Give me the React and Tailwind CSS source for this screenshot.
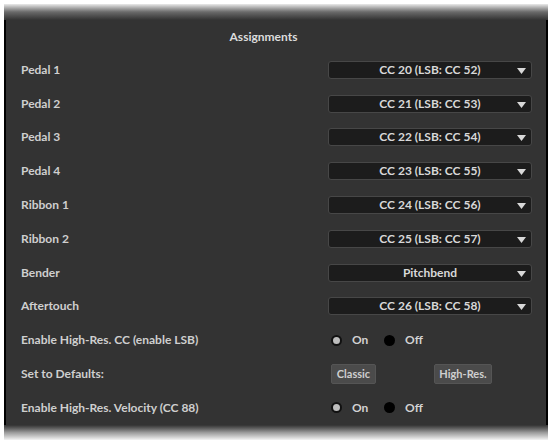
import React from 'react'

const font = { fontFamily: 'Lato, "Open Sans", "Liberation Sans", sans-serif' }

const rows = [
  ['Pedal 1', 'CC 20 (LSB: CC 52)'],
  ['Pedal 2', 'CC 21 (LSB: CC 53)'],
  ['Pedal 3', 'CC 22 (LSB: CC 54)'],
  ['Pedal 4', 'CC 23 (LSB: CC 55)'],
  ['Ribbon 1', 'CC 24 (LSB: CC 56)'],
  ['Ribbon 2', 'CC 25 (LSB: CC 57)'],
  ['Bender', 'Pitchbend'],
  ['Aftertouch', 'CC 26 (LSB: CC 58)'],
]

function Select({ value }) {
  return (
    <div className="relative flex h-[18px] w-[204px] items-center justify-center rounded-[3px] border border-[#474747] bg-[#1c1c1c]">
      <span className="text-[12px] font-bold text-[#d8d8d8]">{value}</span>
      <svg className="absolute right-[5px] top-[6px]" width="9" height="6" viewBox="0 0 9 6">
        <path d="M0 0 H9 L4.5 6 Z" fill="#d8d8d8" />
      </svg>
    </div>
  )
}

function OnOff() {
  return (
    <div className="flex w-[204px] items-center pl-[3px] text-[12px] font-bold text-[#d2d2d2]">
      <span className="h-[11px] w-[11px] rounded-full border-[2px] border-[#111] bg-[#bdbdbd]" />
      <span className="ml-[10px] w-[16px]">On</span>
      <span className="ml-[16px] h-[11px] w-[11px] rounded-full bg-black" />
      <span className="ml-[10px]">Off</span>
    </div>
  )
}

function Row({ label, children }) {
  return (
    <div className="flex h-[33.8px] items-center">
      <div className="flex-1 text-[12px] font-bold text-[#cfcfcf]">{label}</div>
      {children}
    </div>
  )
}

export default function App() {
  return (
    <div className="h-[443px] w-[550px] bg-white pl-[4px] pr-[2px] pt-[4px]" style={font}>
      <div className="flex flex-col">
        <div className="h-[16px] bg-gradient-to-b from-[#eaeaea] via-[#6a6a6a] to-[#333]" />
        <div className="border-x-[2px] border-black bg-[#333] pl-[15px] pr-[14px]">
          <div className="flex h-[33px] items-center justify-center pr-[26px] text-[12px] font-bold text-[#dcdcdc]">
            Assignments
          </div>
          {rows.map(([label, value]) => (
            <Row key={label} label={label}>
              <Select value={value} />
            </Row>
          ))}
          <Row label="Enable High-Res. CC (enable LSB)">
            <OnOff />
          </Row>
          <Row label="Set to Defaults:">
            <div className="flex w-[204px] items-center pl-[3px]">
              <button className="h-[20px] w-[45px] rounded-[2px] border border-[#555] bg-[#4b4b4b] text-[11px] font-bold text-[#cfcfcf]">
                Classic
              </button>
              <button className="ml-[58px] h-[20px] w-[58px] rounded-[2px] border border-[#555] bg-[#4b4b4b] text-[11px] font-bold text-[#cfcfcf]">
                High-Res.
              </button>
            </div>
          </Row>
          <Row label="Enable High-Res. Velocity (CC 88)">
            <OnOff />
          </Row>
        </div>
        <div className="h-[15px] bg-gradient-to-b from-[#333] via-[#9a9a9a] to-[#f4f4f4]" />
      </div>
    </div>
  )
}
